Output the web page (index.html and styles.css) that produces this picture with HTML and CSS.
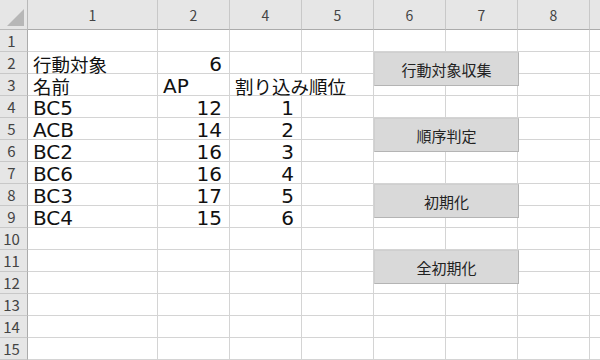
FILE: index.html
```html
<!DOCTYPE html>
<html lang="ja">
<head>
    <meta charset="UTF-8">
    <title>Sheet1</title>
    <link rel="stylesheet" href="styles.css">
</head>
<body>
    <div class="sheet">
        <div class="grid" id="grid"></div>
        <div class="buttons">
            <button class="macro-button">行動対象収集</button>
            <button class="macro-button">順序判定</button>
            <button class="macro-button">初期化</button>
            <button class="macro-button">全初期化</button>
        </div>
    </div>

    <script>
        // シートの中身
        const cols = ['1', '2', '4', '5', '6', '7', '8', ''];
        const data = {
            2: ['行動対象', 6],
            3: ['名前', 'AP', '割り込み順位'],
            4: ['BC5', 12, 1],
            5: ['ACB', 14, 2],
            6: ['BC2', 16, 3],
            7: ['BC6', 16, 4],
            8: ['BC3', 17, 5],
            9: ['BC4', 15, 6]
        };

        function cell(cls, text) {
            const div = document.createElement('div');
            div.className = cls;
            div.textContent = text;
            return div;
        }

        const grid = document.getElementById('grid');
        const corner = cell('corner', '');
        corner.innerHTML = '<svg width="18" height="17" viewBox="0 0 18 17"><polygon points="17,0 17,17 0,17" fill="#b7b7b7"/></svg>';
        grid.appendChild(corner);
        cols.forEach(c => grid.appendChild(cell('col-head', c)));

        for (let r = 1; r <= 15; r++) {
            grid.appendChild(cell('row-head', r));
            const values = data[r] || [];
            cols.forEach((c, i) => {
                const v = values[i];
                let cls = 'cell';
                if (typeof v === 'number') cls += ' num';
                if (typeof v === 'string' && /[^\x00-\x7f]/.test(v)) cls += ' ja';
                if (typeof v === 'string' && v.length > 4) cls += ' spill';
                grid.appendChild(cell(cls, v === undefined ? '' : v));
            });
        }
    </script>
</body>
</html>
```

FILE: styles.css
```css
* {
    margin: 0;
    padding: 0;
    box-sizing: border-box;
}

body {
    font-family: "Noto Sans CJK JP", "Noto Sans", sans-serif;
    background: white;
    width: 600px;
    height: 360px;
    overflow: hidden;
}

.sheet {
    position: relative;
}

.grid {
    display: grid;
    grid-template-columns: 28px 130px repeat(6, 72px) 1fr;
    grid-template-rows: 30px repeat(15, 22px);
}

.corner {
    background: #e6e6e6;
    border-right: 1px solid #b9b9b9;
    border-bottom: 1px solid #b9b9b9;
    display: flex;
    justify-content: flex-end;
    align-items: flex-end;
    padding: 0 2px 3px 0;
}

.col-head {
    background: #e6e6e6;
    border-right: 1px solid #c8c8c8;
    border-bottom: 1px solid #ababab;
    color: #444;
    font-size: 14px;
    line-height: 30px;
    text-align: center;
}

.row-head {
    background: #e6e6e6;
    border-right: 1px solid #ababab;
    border-bottom: 1px solid #c8c8c8;
    color: #444;
    font-size: 15px;
    line-height: 22px;
    text-align: center;
    padding-right: 4px;
}

.cell {
    border-right: 1px solid #d4d4d4;
    border-bottom: 1px solid #d4d4d4;
    font-family: "DejaVu Sans", "Noto Sans CJK JP", sans-serif;
    font-size: 20px;
    line-height: 20px;
    padding: 2px 5px 0;
    white-space: nowrap;
    color: #111;
}

.cell.num {
    text-align: right;
    padding-right: 7px;
}

.cell.ja {
    font-family: "Noto Sans CJK JP", sans-serif;
    font-size: 18.5px;
}

.cell.spill {
    border-right: none;
    overflow: visible;
}

.buttons {
    position: absolute;
    left: 374px;
    top: 52px;
    display: flex;
    flex-direction: column;
    gap: 32px;
}

.macro-button {
    width: 145px;
    height: 34px;
    background: #d9d9d9;
    border: 1px solid #b4b4b4;
    border-top-color: #cfcfcf;
    border-left-color: #cfcfcf;
    font-family: "Noto Sans CJK JP", sans-serif;
    font-size: 15px;
    color: #222;
}
```
